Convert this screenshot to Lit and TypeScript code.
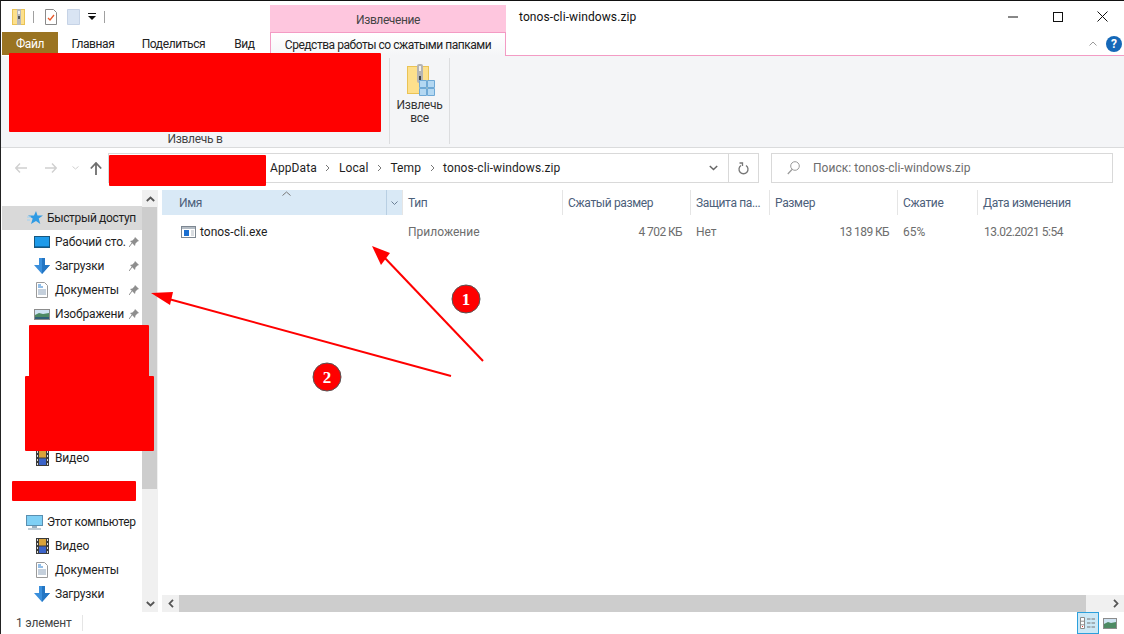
import { LitElement, css, html, svg } from 'lit';
import { customElement } from 'lit/decorators.js';

const zipIcon = svg`<rect x=".5" y=".5" width="12" height="15" fill="#fde08c" stroke="#eac355"/><rect x="5" y="0" width="4" height="16" fill="#b9b9b9"/><rect x="6" y="2" width="2" height="3" fill="#eee"/><rect x="6" y="7" width="2" height="3" fill="#555"/>`;

const icons = {
  desktop: html`<svg width="16" height="12" viewBox="0 0 16 12"><rect x=".5" y=".5" width="15" height="11" fill="#1e9bea" stroke="#17577f"/><rect x="1" y="10" width="14" height="1" fill="#0f6fb0"/></svg>`,
  download: html`<svg width="16" height="16" viewBox="0 0 16 16"><path d="M5 0h6v7h5l-8 9-8-9h5z" fill="#3a8fdc"/><path d="M8 0h3v7h5l-8 9z" fill="#2476c4"/></svg>`,
  docs: html`<svg width="12" height="16" viewBox="0 0 12 16"><path d="M.5.5h8l3 3v12H.5z" fill="#fff" stroke="#9a9a9a"/><path d="M2 3h3M2 5h5" stroke="#2a7fd0"/><path d="M2 8h8M2 10h8M2 12h8" stroke="#8aa0b8"/></svg>`,
  images: html`<svg width="16" height="11" viewBox="0 0 16 11"><rect x=".5" y=".5" width="15" height="10" fill="#cfe3f2" stroke="#8c8c8c"/><path d="M1 6l4-2 4 1 6-1v6H1z" fill="#4d8a63"/><path d="M1 8h14v2H1z" fill="#2f5f78"/></svg>`,
  video: html`<svg width="13" height="16" viewBox="0 0 13 16"><rect width="13" height="16" fill="#3a3a3a"/><rect x="3" y="1" width="7" height="6.500" fill="#d8a23a"/><rect x="3" y="8.500" width="7" height="6.500" fill="#3b63c8"/><path d="M1 1h1v2H1zM1 5h1v2H1zM1 9h1v2H1zM1 13h1v2H1zM11 1h1v2h-1zM11 5h1v2h-1zM11 9h1v2h-1zM11 13h1v2h-1z" fill="#ddd"/></svg>`,
  computer: html`<svg width="17" height="15" viewBox="0 0 17 15"><rect x=".5" y=".5" width="16" height="10" fill="#7fd0f5" stroke="#5a8fb0"/><path d="M6 11h5v2H6z" fill="#9ab0c0"/><path d="M2 13.500h13v1H2z" fill="#7f98aa"/></svg>`,
  star: html`<svg width="16" height="14" viewBox="0 0 16 14"><path d="M9 0l1.500 4.500H16l-4.300 3 1.600 5.500L9 10l-5 3 1.700-5.500L1 4.500h6z" fill="#2f9be4"/><path d="M0 6h4M0 9h3" stroke="#9fd2f2"/></svg>`
};

const pin = html`<svg class="pin" width="10" height="10" viewBox="0 0 10 10"><path d="M6 0l4 4-1.500.6-2 2L6 9 1 4l2.400-.5 2-2z" fill="#8e8e8e"/><path d="M3 6L0 10" stroke="#8e8e8e"/></svg>`;

const quick = [
  { icon: 'desktop', label: 'Рабочий сто.', pinned: true },
  { icon: 'download', label: 'Загрузки', pinned: true },
  { icon: 'docs', label: 'Документы', pinned: true },
  { icon: 'images', label: 'Изображени', pinned: true }
];

const computer = [
  { icon: 'video', label: 'Видео' },
  { icon: 'docs', label: 'Документы' },
  { icon: 'download', label: 'Загрузки' }
];

const columns = ['Тип', 'Сжатый размер', 'Защита па...', 'Размер', 'Сжатие', 'Дата изменения'];

// закрашенные области скриншота
const redactions = [
  [9, 53, 372, 79],
  [109, 155, 157, 31],
  [29, 325, 120, 52],
  [25, 376, 129, 75],
  [12, 481, 124, 20]
];

@customElement('app-root')
export class AppRoot extends LitElement {
  static styles = css`
    :host {
      display: block;
      position: relative;
      width: 1124px;
      height: 634px;
      overflow: hidden;
      background: #fff;
      font-family: Roboto, 'Noto Sans', sans-serif;
      font-size: 12px;
      color: #1e1e1e;
    }
    svg { display: block; flex: none; }
    .window {
      box-sizing: border-box;
      width: 1124px;
      height: 634px;
      display: flex;
      flex-direction: column;
      border-top: 1px solid #111;
      border-left: 1px solid #222;
    }
    .title { height: 31px; flex: none; display: flex; }
    .qat { width: 258px; padding-left: 11px; display: flex; align-items: center; }
    .qat .sep { width: 1px; height: 12px; background: #a0a0a0; margin: 0 11px 0 8px; }
    .qat .blank { margin: 0 8px 0 10px; }
    .context {
      width: 236px;
      margin-top: 4px;
      padding-top: 2px;
      box-sizing: border-box;
      background: #fec6de;
      display: flex;
      align-items: center;
      justify-content: center;
      color: #444;
      letter-spacing: -0.4px;
    }
    .name { margin-left: 13px; margin-top: 9px; color: #111; letter-spacing: 0.1px; }
    .controls { margin-left: auto; display: flex; }
    .controls div { width: 45px; height: 31px; display: flex; align-items: center; justify-content: center; }
    .controls div:first-child { width: 44px; }
    .controls div:last-child { width: 44px; }

    .tabs { height: 24px; flex: none; display: flex; position: relative; }
    .tab { display: flex; align-items: center; justify-content: center; height: 23px; color: #222; letter-spacing: -0.4px; }
    .file { width: 56px; margin-left: 1px; background: #9a7422; color: #fff; }
    .active {
      box-sizing: border-box;
      width: 236px;
      height: 24px;
      border: 1px solid #f39bc4;
      border-bottom: 0;
      background: linear-gradient(#fff, #f4f5f7);
      letter-spacing: -0.47px;
    }
    .tabs-rest {
      flex: 1;
      border-bottom: 1px solid #f39bc4;
      display: flex;
      align-items: center;
      justify-content: flex-end;
      gap: 9px;
      padding-right: 2px;
    }
    .help {
      width: 16px;
      height: 16px;
      border-radius: 50%;
      background: #1568b8;
      color: #fff;
      font-weight: 700;
      font-size: 12px;
      line-height: 16px;
      text-align: center;
    }

    .ribbon {
      box-sizing: border-box;
      height: 92px;
      flex: none;
      display: flex;
      background: #f4f5f7;
      border-bottom: 1px solid #dadbdc;
      padding: 2px 0 3px;
    }
    .group { border-right: 1px solid #dcdddf; display: flex; flex-direction: column; align-items: center; letter-spacing: -0.3px; }
    .extract-to { width: 388px; justify-content: flex-end; color: #444; line-height: 14px; margin-bottom: -2px; border-right: 0; }
    .extract-to + .extract-all { border-left: 1px solid #dcdddf; }
    .extract-all { width: 59px; color: #333; line-height: 13px; text-align: center; }
    .extract-all svg { margin: 6px 0 3px 2px; }

    .nav { height: 42px; flex: none; box-sizing: border-box; padding: 5px 11px 7px 0; display: flex; align-items: center; }
    .nav-buttons { width: 107px; display: flex; align-items: center; padding-left: 14px; box-sizing: border-box; }
    .box {
      box-sizing: border-box;
      height: 30px;
      border: 1px solid #d9d9d9;
      display: flex;
      align-items: center;
    }
    .address { width: 651px; color: #1e1e1e; letter-spacing: 0.1px; }
    .crumbs { flex: 1; display: flex; align-items: center; padding-left: 161px; }
    .crumbs svg { margin: 0 8.500px; }
    .addr-drop { width: 30px; display: flex; justify-content: center; }
    .refresh { width: 29px; height: 28px; border-left: 1px solid #d9d9d9; display: flex; align-items: center; justify-content: center; }
    .search { width: 342px; margin-left: 12px; padding-left: 15px; color: #6d6d6d; gap: 13px; letter-spacing: 0.05px; }

    .main { flex: 1; min-height: 0; display: flex; }
    .tree { width: 141px; padding: 16px 0 0 1px; box-sizing: border-box; flex: none; overflow: hidden; letter-spacing: -0.15px; }
    .row { height: 24px; display: flex; align-items: center; color: #1e1e1e; white-space: nowrap; }
    .row .ic { width: 16px; display: flex; justify-content: center; margin: 0 5px 0 32px; flex: none; }
    .row .pin { margin-left: auto; margin-right: 3px; }
    .row.top { background: #d9d9d9; letter-spacing: -0.35px; }
    .row.pc { letter-spacing: -0.3px; }
    .row.top .ic, .row.pc .ic { margin: 0 4px 0 24px; width: 17px; }
    .gap { height: 40px; }
    .hidden-rows { height: 120px; }

    .vbar { width: 16px; flex: none; display: flex; flex-direction: column; background: #f0f0f0; margin-right: 4px; }
    .bar-btn { height: 17px; flex: none; display: flex; align-items: center; justify-content: center; }
    .vbar .thumb { height: 282px; background: #cdcdcd; width: 15px; }
    .vbar .rest { flex: 1; }

    .content { flex: 1; min-width: 0; display: flex; flex-direction: column; }
    .cols {
      display: grid;
      grid-template-columns: 240px 160px 128px 79px 128px 80px 1fr;
      align-items: center;
    }
    .head { height: 25px; color: #4c607a; letter-spacing: -0.35px; }
    .head > div { height: 25px; display: flex; align-items: center; padding-left: 5px; border-left: 1px solid #e5e5e5; box-sizing: border-box; }
    .head .sorted {
      background: #d9e9f6;
      border-left: 0;
      padding-left: 17px;
      position: relative;
      justify-content: space-between;
      padding-right: 0;
    }
    .sort { position: absolute; left: 120px; top: 1px; }
    .split { width: 15px; height: 25px; border-left: 1px solid #b8cfe3; display: flex; align-items: center; justify-content: center; }
    .item { height: 24px; margin-top: 5px; color: #6d6d6d; }
    .item > div { padding-left: 6px; }
    .item .file-name { display: flex; align-items: center; gap: 4px; padding-left: 19px; color: #1e1e1e; }
    .item .num { text-align: right; padding: 0 8px 0 0; letter-spacing: -0.6px; }
    .item .date { letter-spacing: -0.5px; padding-left: 7px; }
    .spacer { flex: 1; }

    .hbar { height: 17px; flex: none; display: flex; background: #f0f0f0; }
    .hbar .bar-btn { width: 17px; height: 17px; }
    .hbar .thumb { width: 907px; background: #cdcdcd; }
    .hbar .rest { flex: 1; }

    .status { height: 22px; flex: none; display: flex; align-items: center; color: #444; padding-left: 15px; position: relative; letter-spacing: -0.2px; }
    .status .sep { width: 1px; height: 16px; background: #e5e5e5; margin-left: 10px; }
    .views { margin-left: auto; display: flex; align-items: center; gap: 4px; padding-right: 7px; }
    .views .on { box-sizing: border-box; width: 22px; height: 22px; background: #cce8f6; border: 1px solid #2da0dc; display: flex; align-items: center; justify-content: center; }

    .marks { position: absolute; left: 0; top: 0; pointer-events: none; }
    .marks text { font-family: 'Liberation Serif', serif; font-weight: 700; font-size: 17px; fill: #fff; text-anchor: middle; }
  `;

  private renderRow(r: { icon: string; label: string; pinned?: boolean }, cls = '') {
    return html`<div class="row ${cls}">
      <div class="ic">${icons[r.icon as keyof typeof icons]}</div>
      <span>${r.label}</span>
      ${r.pinned ? pin : ''}
    </div>`;
  }

  render() {
    return html`
      <div class="window">
        <div class="title">
          <div class="qat">
            <svg width="13" height="16" viewBox="0 0 13 16">${zipIcon}</svg>
            <div class="sep"></div>
            <svg width="12" height="16" viewBox="0 0 12 16"><path d="M.5.5h8l3 3v12H.5z" fill="#fff" stroke="#8a8a8a"/><path d="M3 9l2 2 4-5" fill="none" stroke="#e8592a" stroke-width="1.300"/></svg>
            <svg class="blank" width="13" height="16" viewBox="0 0 13 16"><path d="M.5.500h12v15H.5z" fill="#d9e4f3" stroke="#c6d3e6"/></svg>
            <svg width="8" height="7" viewBox="0 0 8 7"><path d="M0 0h8v1H0z" fill="#111"/><path d="M0 3h8L4 7z" fill="#111"/></svg>
            <div class="sep" style="margin-left:8px"></div>
          </div>
          <div class="context">Извлечение</div>
          <div class="name">tonos-cli-windows.zip</div>
          <div class="controls">
            <div><svg width="10" height="2" viewBox="0 0 10 2"><path d="M0 1h10" stroke="#111"/></svg></div>
            <div><svg width="10" height="10" viewBox="0 0 10 10"><rect x=".5" y=".5" width="9" height="9" fill="none" stroke="#111"/></svg></div>
            <div><svg width="11" height="11" viewBox="0 0 11 11"><path d="M.5.500l10 10M10.500.500l-10 10" stroke="#111"/></svg></div>
          </div>
        </div>
        <div class="tabs">
          <div class="tab file">Файл</div>
          <div class="tab" style="width:70px">Главная</div>
          <div class="tab" style="width:91px">Поделиться</div>
          <div class="tab" style="width:51px">Вид</div>
          <div class="tab active">Средства работы со сжатыми папками</div>
          <div class="tabs-rest">
            <svg width="8" height="5" viewBox="0 0 8 5"><path d="M.5 4.500L4 1l3.500 3.500" fill="none" stroke="#9a9a9a"/></svg>
            <div class="help">?</div>
          </div>
        </div>
        <div class="ribbon">
          <div class="group extract-to">Извлечь в</div>
          <div class="group extract-all">
            <svg width="28" height="32" viewBox="0 0 28 32">
              <rect x=".5" y="2.500" width="21" height="27" fill="#fde08c" stroke="#eac355"/>
              <rect x="10" y="0" width="6" height="19" rx="2" fill="#b4b4b4"/><rect x="12" y="2" width="2" height="5" fill="#eee"/><rect x="12" y="12" width="2" height="4" fill="#444"/>
              <path d="M12.500 16.500h7v7h-7zM20.500 16.500h7v7h-7zM12.500 24.500h7v7h-7zM20.500 24.500h7v7h-7z" fill="#b4d8f2" stroke="#6fa9d6"/>
            </svg>
            <div>Извлечь<br />все</div>
          </div>
        </div>
        <div class="nav">
          <div class="nav-buttons">
            <svg width="12" height="10" viewBox="0 0 12 10"><path d="M5 .500L.8 5 5 9.500M1 5h11" fill="none" stroke="#d0d0d0" stroke-width="1.400"/></svg>
            <svg style="margin-left:18px" width="12" height="10" viewBox="0 0 12 10"><path d="M7 .500L11.200 5 7 9.500M11 5H0" fill="none" stroke="#d0d0d0" stroke-width="1.400"/></svg>
            <svg style="margin-left:15px" width="7" height="4" viewBox="0 0 7 4"><path d="M.5.500L3.500 3l3-2.500" fill="none" stroke="#d0d0d0"/></svg>
            <svg style="margin-left:11px" width="12" height="13" viewBox="0 0 12 13"><path d="M6 13V1.500M.8 6.500L6 1l5.200 5.500" fill="none" stroke="#6e6e6e" stroke-width="1.800"/></svg>
          </div>
          <div class="box address">
            <div class="crumbs">
              AppData
              <svg width="5" height="8" viewBox="0 0 5 8"><path d="M1 1l3 3-3 3" fill="none" stroke="#777"/></svg>
              Local
              <svg width="5" height="8" viewBox="0 0 5 8"><path d="M1 1l3 3-3 3" fill="none" stroke="#777"/></svg>
              Temp
              <svg width="5" height="8" viewBox="0 0 5 8"><path d="M1 1l3 3-3 3" fill="none" stroke="#777"/></svg>
              tonos-cli-windows.zip
            </div>
            <div class="addr-drop"><svg width="9" height="6" viewBox="0 0 9 6"><path d="M.8 1l3.700 3.500L8.200 1" fill="none" stroke="#666" stroke-width="1.500"/></svg></div>
            <div class="refresh"><svg width="11" height="13" viewBox="0 0 11 13"><path d="M3 3.500a4.500 4.500 0 1 0 5 0M1.500 1h3v3" fill="none" stroke="#777" stroke-width="1.300"/></svg></div>
          </div>
          <div class="box search">
            <svg width="13" height="14" viewBox="0 0 13 14"><circle cx="8" cy="5" r="4.300" fill="none" stroke="#999"/><path d="M5 8.500L.8 13" stroke="#999" stroke-width="1.200"/></svg>
            Поиск: tonos-cli-windows.zip
          </div>
        </div>
        <div class="main">
          <div class="tree">
            ${this.renderRow({ icon: 'star', label: 'Быстрый доступ' }, 'top')}
            ${quick.map((r) => this.renderRow(r))}
            <div class="hidden-rows"></div>
            ${this.renderRow({ icon: 'video', label: 'Видео' })}
            <div class="gap"></div>
            ${this.renderRow({ icon: 'computer', label: 'Этот компьютер' }, 'pc')}
            ${computer.map((r) => this.renderRow(r))}
          </div>
          <div class="vbar">
            <div class="bar-btn"><svg width="9" height="6" viewBox="0 0 9 6"><path d="M.8 5l3.700-3.500L8.200 5" fill="none" stroke="#555" stroke-width="1.800"/></svg></div>
            <div class="thumb"></div>
            <div class="rest"></div>
            <div class="bar-btn"><svg width="9" height="6" viewBox="0 0 9 6"><path d="M.8 1l3.700 3.500L8.200 1" fill="none" stroke="#555" stroke-width="1.800"/></svg></div>
          </div>
          <div class="content">
            <div class="cols head">
              <div class="sorted">
                Имя
                <svg class="sort" width="9" height="5" viewBox="0 0 9 5"><path d="M.5 4.500L4.500 1l4 3.500" fill="none" stroke="#777"/></svg>
                <div class="split"><svg width="7" height="4" viewBox="0 0 7 4"><path d="M.5.500L3.500 3.500l3-3" fill="none" stroke="#6b7f95"/></svg></div>
              </div>
              ${columns.map((c) => html`<div>${c}</div>`)}
            </div>
            <div class="cols item">
              <div class="file-name">
                <svg width="15" height="12" viewBox="0 0 15 12"><rect x=".5" y=".5" width="14" height="11" fill="#fff" stroke="#7d8791"/><rect x="1" y="1" width="13" height="2" fill="#b4bcc4"/><rect x="3" y="4" width="5" height="6" fill="#1a6fd0"/><path d="M10 5h3M10 7h3M10 9h3" stroke="#b4bcc4"/></svg>
                tonos-cli.exe
              </div>
              <div>Приложение</div>
              <div class="num">4 702 КБ</div>
              <div>Нет</div>
              <div class="num">13 189 КБ</div>
              <div>65%</div>
              <div class="date">13.02.2021 5:54</div>
            </div>
            <div class="spacer"></div>
            <div class="hbar">
              <div class="bar-btn"><svg width="6" height="9" viewBox="0 0 6 9"><path d="M5 .800L1.500 4.500 5 8.200" fill="none" stroke="#555" stroke-width="1.800"/></svg></div>
              <div class="thumb"></div>
              <div class="rest"></div>
              <div class="bar-btn"><svg width="6" height="9" viewBox="0 0 6 9"><path d="M1 .800L4.500 4.500 1 8.200" fill="none" stroke="#555" stroke-width="1.800"/></svg></div>
            </div>
          </div>
        </div>
        <div class="status">
          1 элемент
          <div class="sep"></div>
          <div class="views">
            <div class="on"><svg width="16" height="12" viewBox="0 0 16 12"><path d="M.5.500h4v11h-4zM.5 4.200h4M.5 7.800h4" fill="#fff" stroke="#8c8c8c"/><path d="M7 2h8M7 6h8M7 10h8" stroke="#777" stroke-dasharray="3.500 1"/><rect x="2" y="9" width="1" height="1" fill="#d33"/></svg></div>
            <svg width="14" height="11" viewBox="0 0 14 11"><rect x=".5" y=".5" width="13" height="10" fill="#cfe3f2" stroke="#8c8c8c"/><path d="M1 6l4-2 3 1 5-1v6H1z" fill="#4d8a63"/></svg>
          </div>
        </div>
      </div>
      <svg class="marks" width="1124" height="634" viewBox="0 0 1124 634">
        ${redactions.map(([x, y, w, h]) => svg`<rect x=${x} y=${y} width=${w} height=${h} rx="1" fill="#ff0000"/>`)}
        <path d="M483 361L383 256" stroke="#ff0000" stroke-width="2"/>
        <path d="M372 246l18 7-9 12z" fill="#ff0000"/>
        <path d="M451 376L165 298" stroke="#ff0000" stroke-width="2"/>
        <path d="M151 293l22-1-3 13z" fill="#ff0000"/>
        <circle cx="466" cy="299" r="14" fill="#ff0000" stroke="#555"/>
        <text x="466" y="305">1</text>
        <circle cx="327" cy="377" r="14" fill="#ff0000" stroke="#555"/>
        <text x="327" y="383">2</text>
      </svg>
    `;
  }
}
